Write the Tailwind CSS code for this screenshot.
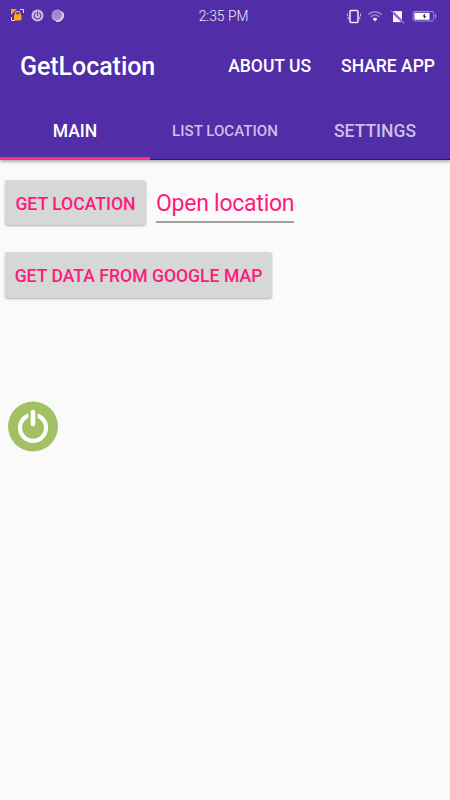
<!DOCTYPE html>
<html lang="en">
<head>
<meta charset="utf-8">
<title>GetLocation</title>
<script src="https://cdn.jsdelivr.net/npm/@tailwindcss/browser@4"></script>
</head>
<body class="w-[450px] h-[800px] overflow-hidden bg-[#fafafa] font-['Roboto',sans-serif] whitespace-nowrap">
<header class="relative z-10 h-[160px] flex flex-col bg-[#512da8] border-b border-[#3505a0] shadow-[0_1px_4px_rgba(0,0,0,0.45)] text-white">
  <div class="h-8 shrink-0 grid grid-cols-3 items-center">
    <div class="flex items-center pl-[10px] pb-[2px] gap-[6px]">
      <svg class="w-[15px] h-[15px]" viewBox="0 0 15 15" fill="none">
        <path d="M1 1H7L1 7Z" fill="#ff9c18"/>
        <path d="M10 1.5H13.5V5M1.5 9V12.5H5" stroke="#e5dcf5" stroke-width="1"/>
        <path d="M5.5 7V5.5a2.2 2.2 0 0 1 4.4 0V7" stroke="#ffa51e" stroke-width="1.2"/>
        <rect x="4" y="6.3" width="7.4" height="6.2" rx="1.2" fill="#ffa51e"/>
      </svg>
      <svg class="w-[13px] h-[13px]" viewBox="0 0 13 13" fill="none">
        <circle cx="6.5" cy="6.5" r="6" fill="#c8bce4"/>
        <path d="M4.6 3.9a3.3 3.3 0 1 0 3.8 0M6.5 2.7v3.8" stroke="#6142b0" stroke-width="1.2" stroke-linecap="round"/>
      </svg>
      <svg class="w-[13px] h-[13px] ml-px" viewBox="0 0 13 13">
        <circle cx="6.5" cy="6.5" r="6" fill="#b5a5da"/>
        <path d="M11.5 3A6 6 0 0 1 5 12.3 6.5 6.5 0 0 0 11.5 3Z" fill="#f2eefa" stroke="#f2eefa" stroke-width=".6"/>
        <circle cx="5.8" cy="5.8" r="4.6" fill="#a08acf"/>
      </svg>
    </div>
    <span class="text-center text-[13.8px] leading-4 text-white/90 font-light relative -left-[1.5px]">2:35 PM</span>
    <div class="flex items-center justify-end pr-[12px] pt-[2px]">
      <svg class="w-[91px] h-[16px]" viewBox="347 9.4 91 16" fill="none">
        <rect x="350" y="11" width="8" height="12" rx="1" stroke="#f1edf8" stroke-width="1.5"/>
        <path d="M347.5 14v2.5M348.2 17v3M360.5 14v2.5M359.8 17v3" stroke="#c7badf" stroke-width="1"/>
        <path d="M368.3 15a9.5 9.5 0 0 1 13.4 0M370.7 17.3a6 6 0 0 1 8.6 0" stroke="#9a85cc" stroke-width="1.5"/>
        <path d="M372.6 19.4a3.4 3.4 0 0 1 4.8 0L375 22Z" fill="#f3effa"/>
        <path d="M393 11.5H402V22.5H393Z" fill="#faf8fd"/>
        <path d="M391.2 11.2L404.3 23.9" stroke="#512da8" stroke-width="2.2"/>
        <path d="M391.2 11.2L404.3 23.9" stroke="#c4b6e1" stroke-width="1"/>
        <rect x="413.2" y="11.8" width="20.6" height="9.6" rx="1.8" stroke="#a391d0" stroke-width="1"/>
        <path d="M435.5 14.5Q437 16.5 435.5 18.8Z" fill="#a391d0" stroke="#a391d0" stroke-width=".6"/>
        <rect x="414.5" y="13.1" width="15" height="7" rx=".5" fill="#fff"/>
        <path d="M425.1 14L422.4 17H424.1L423.7 19.4L426.4 16.4H424.8Z" fill="#222"/>
      </svg>
    </div>
  </div>
  <div class="h-[68px] shrink-0 flex items-center pl-[20px] pr-[15px] font-medium">
    <h1 class="text-[25px] leading-8 grow tracking-[-0.05px] pt-[2px]">GetLocation</h1>
    <span class="text-[17.5px] mr-[30px]">ABOUT US</span>
    <span class="text-[17.5px]">SHARE APP</span>
  </div>
  <nav class="relative h-[60px] shrink-0 grid grid-cols-3 font-medium text-center">
    <div class="h-[60px] flex items-center justify-center border-b-[3px] border-[#ff2d73] pt-[5px] text-[17.5px]">MAIN</div>
    <div class="h-[60px] flex items-center justify-center pt-[2px] text-[15.1px] text-[#cbc0e5]">LIST LOCATION</div>
    <div class="h-[60px] flex items-center justify-center pt-[2px] text-[17.5px] text-[#cbc0e5]">SETTINGS</div>
  </nav>
</header>
<main class="pl-[5px] pt-[20px] text-[#ff1a7c]">
  <div class="flex items-start">
    <button class="w-[141px] h-[45px] pt-[3px] rounded-[3px] bg-[#d6d7d7] shadow-[0_1px_2px_rgba(0,0,0,0.3)] text-[17.6px] font-medium">GET LOCATION</button>
    <div class="ml-[10px] w-[138px] h-[43px] border-b-2 border-[#a0a0a0] text-[23px] tracking-[-0.25px] leading-[47px]">Open location</div>
  </div>
  <button class="mt-[27px] w-[267px] h-[46px] pt-[2px] rounded-[3px] bg-[#d6d7d7] shadow-[0_1px_2px_rgba(0,0,0,0.3)] text-[17.6px] font-medium">GET DATA FROM GOOGLE MAP</button>
  <svg class="block mt-[103px] ml-[3px] w-[50px] h-[51px]" viewBox="0 0 50 51" fill="none">
    <circle cx="25" cy="25.5" r="25" fill="#a2c164"/>
    <circle cx="25" cy="26.8" r="13" stroke="#fff" stroke-width="4.2"/>
    <path d="M25 11v13" stroke="#a2c164" stroke-width="9.4"/>
    <path d="M25 11v12" stroke="#fff" stroke-width="4.6" stroke-linecap="round"/>
  </svg>
</main>
</body>
</html>
